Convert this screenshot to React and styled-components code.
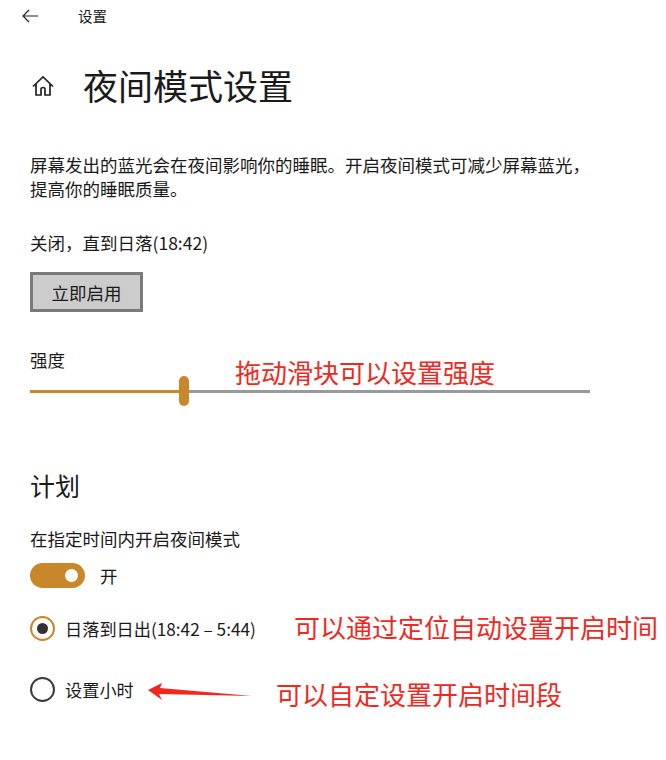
import React from 'react';
import styled, { createGlobalStyle } from 'styled-components';

const GlobalStyle = createGlobalStyle`
  html, body {
    margin: 0;
    padding: 0;
    background: #fff;
  }
  body {
    font-family: "Noto Sans CJK SC", "Liberation Sans", sans-serif;
    color: #1a1a1a;
  }
`;

const Page = styled.div`
  position: relative;
  width: 666px;
  height: 760px;
  overflow: hidden;
`;

const TopBar = styled.div`
  display: flex;
  align-items: center;
  height: 31px;
  padding-left: 22px;
  font-size: 14.5px;
`;

const TopLabel = styled.span`
  margin-left: 40px;
`;

const Header = styled.div`
  display: flex;
  align-items: center;
  gap: 28px;
  height: 50px;
  margin-top: 30px;
  padding-left: 31px;
`;

const Title = styled.h1`
  margin: 0 0 2px;
  font-size: 35px;
  font-weight: 400;
  line-height: 48px;
`;

const Content = styled.div`
  display: flex;
  flex-direction: column;
  align-items: flex-start;
  padding: 0 30px;
`;

const Text = styled.p`
  margin: ${({ $top }) => $top}px 0 0;
  font-size: 17.5px;
  line-height: 24px;
  white-space: nowrap;
`;

const Button = styled.button`
  width: 113px;
  height: 40px;
  margin-top: 17px;
  border: 3px solid #7a7a7a;
  background: #cccccc;
  font-family: inherit;
  font-size: 17.5px;
  color: #1a1a1a;
  padding: 0;
`;

const Slider = styled.div`
  width: 560px;
  height: 30px;
  margin-top: 4px;
  display: flex;
  align-items: center;
  background: linear-gradient(#999, #999) center / 100% 3px no-repeat;
`;

const SliderFill = styled.div`
  height: 3px;
  background: #c9872c;
`;

const SliderThumb = styled.div`
  width: 10px;
  height: 30px;
  border-radius: 5px;
  background: #c9872c;
`;

const SectionTitle = styled.h2`
  margin: 61px 0 0;
  font-size: 25px;
  font-weight: 400;
  line-height: 36px;
`;

const ToggleRow = styled.div`
  display: flex;
  align-items: center;
  gap: 15px;
  margin-top: 11px;
  height: 26px;
  font-size: 17.5px;
`;

const Toggle = styled.div`
  display: flex;
  align-items: center;
  justify-content: flex-end;
  width: 55px;
  height: 25px;
  padding-right: 7px;
  box-sizing: border-box;
  border-radius: 13px;
  background: #c9872c;
`;

const ToggleKnob = styled.div`
  width: 13px;
  height: 13px;
  border-radius: 50%;
  background: #fff;
`;

const RadioRow = styled.div`
  display: flex;
  align-items: center;
  gap: 10px;
  height: 26px;
  margin-top: ${({ $top }) => $top}px;
  font-size: 17.2px;
  white-space: nowrap;
`;

const Radio = styled.div`
  display: flex;
  align-items: center;
  justify-content: center;
  width: 25px;
  height: 25px;
  box-sizing: border-box;
  border-radius: 50%;
  border: 2.5px solid ${({ $on }) => ($on ? '#c9872c' : '#3a3a3a')};
`;

const RadioDot = styled.div`
  width: 11px;
  height: 11px;
  border-radius: 50%;
  background: #333;
`;

const Note = styled.div`
  position: absolute;
  left: ${({ $x }) => $x}px;
  top: ${({ $y }) => $y}px;
  font-size: 26px;
  line-height: 36px;
  color: #f0281e;
  white-space: nowrap;
`;

const ArrowMark = styled.svg`
  position: absolute;
  left: 147px;
  top: 682px;
`;

const COMMA = '\uFF0C';

export default function App() {
  return (
    <Page>
      <GlobalStyle />
      <TopBar>
        <svg width="16" height="14" viewBox="0 0 16 14" fill="none" stroke="#222" strokeWidth="1.2">
          <path d="M7 1 1 7l6 6M1 7h15" />
        </svg>
        <TopLabel>设置</TopLabel>
      </TopBar>
      <Header>
        <svg width="24" height="24" viewBox="0 0 24 24" fill="none" stroke="#222" strokeWidth="1.7">
          <path d="M2 12.5 12 3l10 9.5M5 10v11h5v-5.5a2 2 0 0 1 4 0V21h5V10" />
        </svg>
        <Title>夜间模式设置</Title>
      </Header>
      <Content>
        <Text $top={42}>
          屏幕发出的蓝光会在夜间影响你的睡眠。开启夜间模式可减少屏幕蓝光{COMMA}
          <br />
          提高你的睡眠质量。
        </Text>
        <Text $top={30}>关闭{COMMA}直到日落(18:42)</Text>
        <Button>立即启用</Button>
        <Text $top={36}>强度</Text>
        <Slider>
          <SliderFill style={{ width: 149 }} />
          <SliderThumb />
        </Slider>
        <SectionTitle>计划</SectionTitle>
        <Text $top={24}>在指定时间内开启夜间模式</Text>
        <ToggleRow>
          <Toggle>
            <ToggleKnob />
          </Toggle>
          开
        </ToggleRow>
        <RadioRow $top={27}>
          <Radio $on>
            <RadioDot />
          </Radio>
          日落到日出(18:42 – 5:44)
        </RadioRow>
        <RadioRow $top={35}>
          <Radio />
          设置小时
        </RadioRow>
      </Content>
      <Note $x={235} $y={354}>拖动滑块可以设置强度</Note>
      <Note $x={294} $y={609}>可以通过定位自动设置开启时间</Note>
      <Note $x={276} $y={676}>可以自定设置开启时间段</Note>
      <ArrowMark width="106" height="24" viewBox="0 0 106 24">
        <path d="M1 8 15 1l-2 5 92 8-93-2 3 6z" fill="#f0281e" />
      </ArrowMark>
    </Page>
  );
}
